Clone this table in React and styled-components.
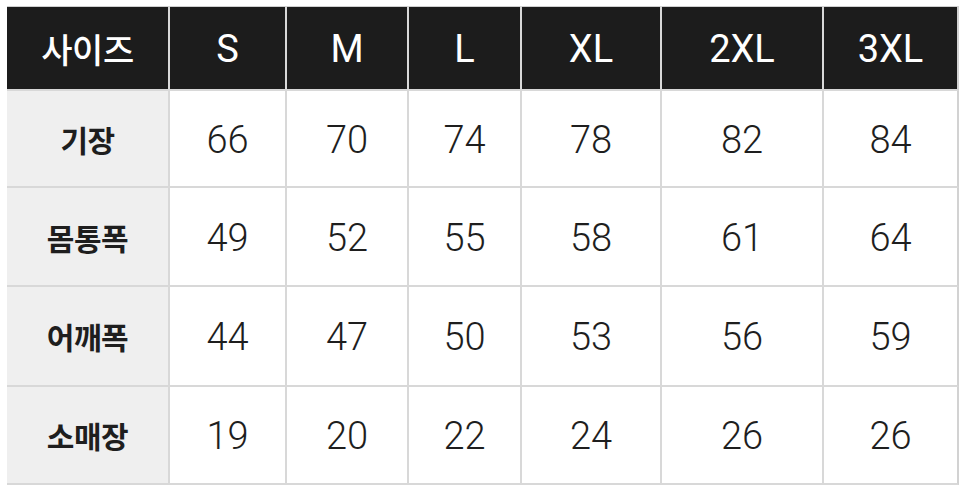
import React from 'react';
import styled, { createGlobalStyle } from 'styled-components';

const GlobalStyle = createGlobalStyle`
  html, body {
    margin: 0;
    padding: 0;
    background: #ffffff;
  }
  body {
    font-family: Roboto, "Noto Sans CJK KR", sans-serif;
  }
`;

const Page = styled.div`
  width: 964px;
  height: 493px;
  padding: 6px 0 0 7px;
  box-sizing: border-box;
  background: #ffffff;
`;

const Grid = styled.div`
  display: grid;
  grid-template-columns: 163px 117px 122px 113px 140px 162px 135px;
  grid-template-rows: 85px 97px 99px 100px 98px;
  width: 952px;
`;

const Cell = styled.div`
  display: flex;
  align-items: center;
  justify-content: center;
  box-sizing: border-box;
  border-right: 2px solid ${({ $last }) => ($last ? '#d2d2d2' : '#d8d8d8')};
  border-bottom: 2px solid #d8d8d8;
  border-top: ${({ $top }) => ($top ? '1px solid #cfcfcf' : 'none')};
  background: ${({ $head, $label }) => ($head ? '#1c1c1c' : $label ? '#efefef' : '#ffffff')};
  color: ${({ $head }) => ($head ? '#ffffff' : '#1e1e1e')};
  font-family: ${({ $label }) =>
    $label ? '"Noto Sans CJK KR", "Noto Sans", sans-serif' : 'Roboto, "Noto Sans CJK KR", sans-serif'};
  font-size: ${({ $head, $label }) => ($head && $label ? '34px' : $label ? '30px' : '38px')};
  font-weight: ${({ $head, $label }) => ($head && $label ? 500 : $label ? 700 : $head ? 400 : 300)};
  padding-top: ${({ $label }) => ($label ? '0' : '2px')};
  letter-spacing: ${({ $label }) => ($label ? '-0.5px' : '0')};
`;

const sizes = ['S', 'M', 'L', 'XL', '2XL', '3XL'];

const rows = [
  { name: '기장', values: [66, 70, 74, 78, 82, 84] },
  { name: '몸통폭', values: [49, 52, 55, 58, 61, 64] },
  { name: '어깨폭', values: [44, 47, 50, 53, 56, 59] },
  { name: '소매장', values: [19, 20, 22, 24, 26, 26] },
];

export default function App() {
  return (
    <>
      <GlobalStyle />
      <Page>
        <Grid>
          <Cell $head $label $top>사이즈</Cell>
          {sizes.map((s, i) => (
            <Cell key={s} $head $top $last={i === sizes.length - 1}>
              {s}
            </Cell>
          ))}
          {rows.map((row) => (
            <React.Fragment key={row.name}>
              <Cell $label>{row.name}</Cell>
              {row.values.map((v, i) => (
                <Cell key={i} $last={i === row.values.length - 1}>
                  {v}
                </Cell>
              ))}
            </React.Fragment>
          ))}
        </Grid>
      </Page>
    </>
  );
}
